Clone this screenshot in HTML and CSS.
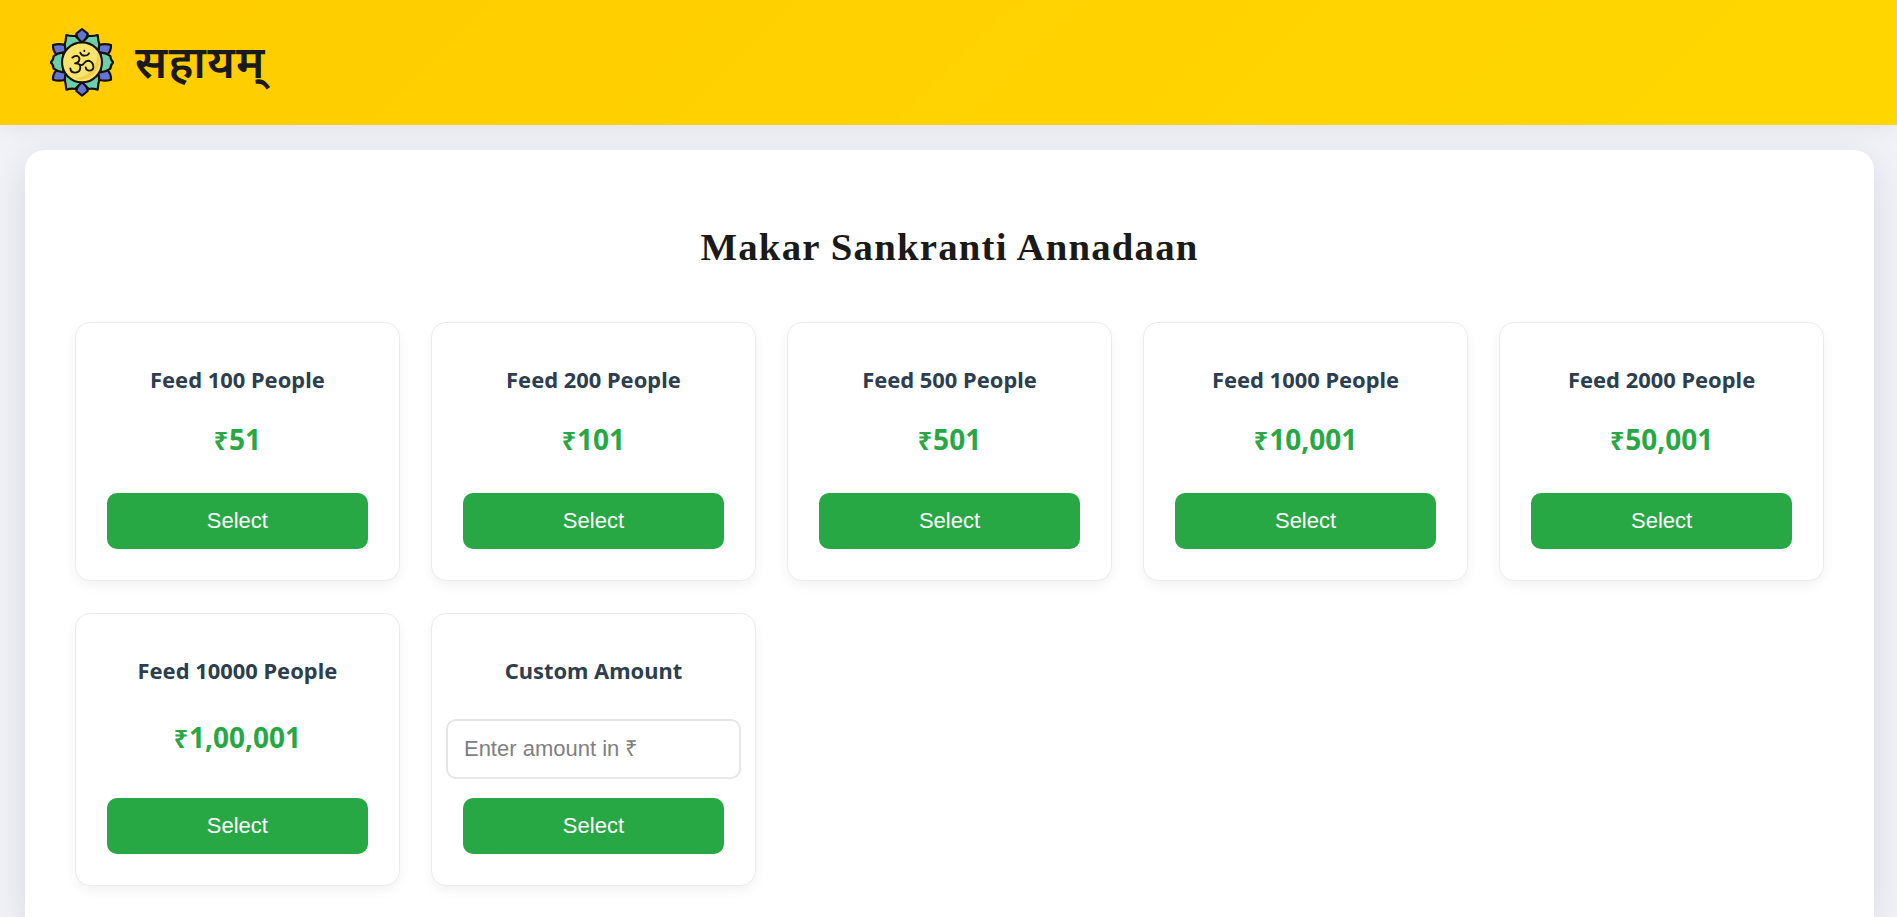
FILE: index.html
```html
<!DOCTYPE html>
<html lang="en">
<head>
<meta charset="utf-8">
<title>सहायम्</title>
<link rel="stylesheet" href="styles.css">
</head>
<body>
<header class="header">
  <svg class="logo" viewBox="30 21 192 210" fill="none" stroke="#16110a" stroke-width="6.5" stroke-linejoin="round" stroke-linecap="round">
    <g fill="#6375d6">
      <path d="M126 27L109 41Q111 58 126 68Q141 58 143 41Z"/>
      <path d="M126 227L109 213Q111 196 126 186Q141 196 143 213Z"/>
      <path d="M39 75Q54 70 74 74L78 98L50 104Q38 92 39 75Z"/>
      <path d="M213 75Q198 70 178 74L174 98L202 104Q214 92 213 75Z"/>
      <path d="M39 179Q54 184 74 180L78 156L50 150Q38 162 39 179Z"/>
      <path d="M213 179Q198 184 178 180L174 156L202 150Q214 162 213 179Z"/>
    </g>
    <g fill="#6bcfae">
      <path d="M79 45Q96 50 106 47Q115 57 126 68L100 86L80 97Q71 78 77 62Z"/>
      <path d="M173 45Q156 50 146 47Q137 57 126 68L152 86L172 97Q181 78 175 62Z"/>
      <path d="M79 209Q96 204 106 207Q115 197 126 186L100 168L80 157Q71 176 77 192Z"/>
      <path d="M173 209Q156 204 146 207Q137 197 126 186L152 168L172 157Q181 176 175 192Z"/>
      <path d="M32 127Q40 121 41 108Q52 99 70 97V157Q52 155 41 146Q40 133 32 127Z"/>
      <path d="M220 127Q212 121 211 108Q200 99 182 97V157Q200 155 211 146Q212 133 220 127Z"/>
    </g>
    <circle cx="126" cy="127" r="60" fill="#f8e36c"/>
    <path d="M174 98Q188 132 162 162Q140 184 106 176Q168 166 174 98Z" fill="#f5cd4d" stroke="none"/>
    <path stroke-width="5.5" d="M97 113Q104 106 112 108Q121 112 117 123Q114 129 105 130Q121 129 121 142Q121 157 106 158Q92 158 91 145M119 134Q127 138 132 130Q139 120 149 123Q161 128 160 143Q158 153 147 152Q138 150 137 142M121 98Q124 107 134 107Q143 107 147 100M133 92V93"/>
  </svg>
  <span class="brand" lang="hi">सहायम्</span>
</header>
<main class="panel">
  <h1 class="title">Makar Sankranti Annadaan</h1>
  <div class="grid">
    <section class="card"><h2 class="name">Feed 100 People</h2><p class="price"><span class="rupee">₹</span>51</p><button class="select">Select</button></section>
    <section class="card"><h2 class="name">Feed 200 People</h2><p class="price"><span class="rupee">₹</span>101</p><button class="select">Select</button></section>
    <section class="card"><h2 class="name">Feed 500 People</h2><p class="price"><span class="rupee">₹</span>501</p><button class="select">Select</button></section>
    <section class="card"><h2 class="name">Feed 1000 People</h2><p class="price"><span class="rupee">₹</span>10,001</p><button class="select">Select</button></section>
    <section class="card"><h2 class="name">Feed 2000 People</h2><p class="price"><span class="rupee">₹</span>50,001</p><button class="select">Select</button></section>
    <section class="card"><h2 class="name">Feed 10000 People</h2><p class="price"><span class="rupee">₹</span>1,00,001</p><button class="select">Select</button></section>
    <section class="card"><h2 class="name">Custom Amount</h2><input class="amount" type="text" placeholder="Enter amount in ₹"><button class="select">Select</button></section>
  </div>
</main>
</body>
</html>
```
FILE: styles.css
```css
* {
  box-sizing: border-box;
}

body {
  margin: 0;
  background: #f0f2f7;
  font-family: "Noto Sans", sans-serif;
}

.header {
  position: relative;
  display: flex;
  align-items: center;
  gap: 21px;
  height: 125px;
  padding: 0 50px 1px;
  background: linear-gradient(135deg, #ffcc00, #ffd700);
  box-shadow: 0 4px 20px rgba(0, 0, 0, 0.06);
}

.logo {
  width: 64px;
  height: 70px;
}

.brand {
  margin-top: -4px;
  color: #1a1a1a;
  font-size: 45px;
  font-weight: 600;
  line-height: 1;
  letter-spacing: 1.25px;
}

.panel {
  height: 767px;
  margin: 25px 23px 0 25px;
  padding: 73px 50px 0;
  border-radius: 20px 20px 0 0;
  background: #fff;
  box-shadow: 0 10px 38px rgba(0, 0, 0, 0.1);
}

.title {
  margin: 0 0 52px;
  color: #1a1a1a;
  font: bold 38.8px/47px "Liberation Serif", serif;
  letter-spacing: 1.2px;
  text-align: center;
}

.grid {
  display: grid;
  grid-template-columns: repeat(5, minmax(0, 1fr));
  grid-template-rows: 259px 273px;
  gap: 32px 31.25px;
}

.card {
  display: flex;
  flex-direction: column;
  align-items: center;
  justify-content: space-between;
  padding: 41px 31px 31px;
  border: 1px solid #ebebeb;
  border-radius: 15px;
  background: #fff;
  box-shadow: 0 5px 12px rgba(0, 0, 0, 0.05);
}

.name {
  margin: 0;
  color: #2c3e50;
  font-size: 21.9px;
  font-weight: 700;
  line-height: 32px;
}

.price {
  margin: 0 0 10px;
  color: #28a745;
  font-size: 28px;
  font-weight: 700;
  line-height: 38px;
}

.rupee {
  margin-right: 1px;
  font-size: 25px;
}

.select {
  width: 100%;
  height: 56px;
  padding: 0;
  border: 0;
  border-radius: 10px;
  background: #28a745;
  color: #fff;
  font: 22px "Liberation Sans", Arial, sans-serif;
}

.amount {
  width: 295px;
  height: 60px;
  margin-top: 12px;
  padding: 0 16px;
  border: 2px solid #e6e6e6;
  border-radius: 10px;
  font: 22px "Liberation Sans", Arial, sans-serif;
}

.amount::placeholder {
  color: #808080;
}
```
